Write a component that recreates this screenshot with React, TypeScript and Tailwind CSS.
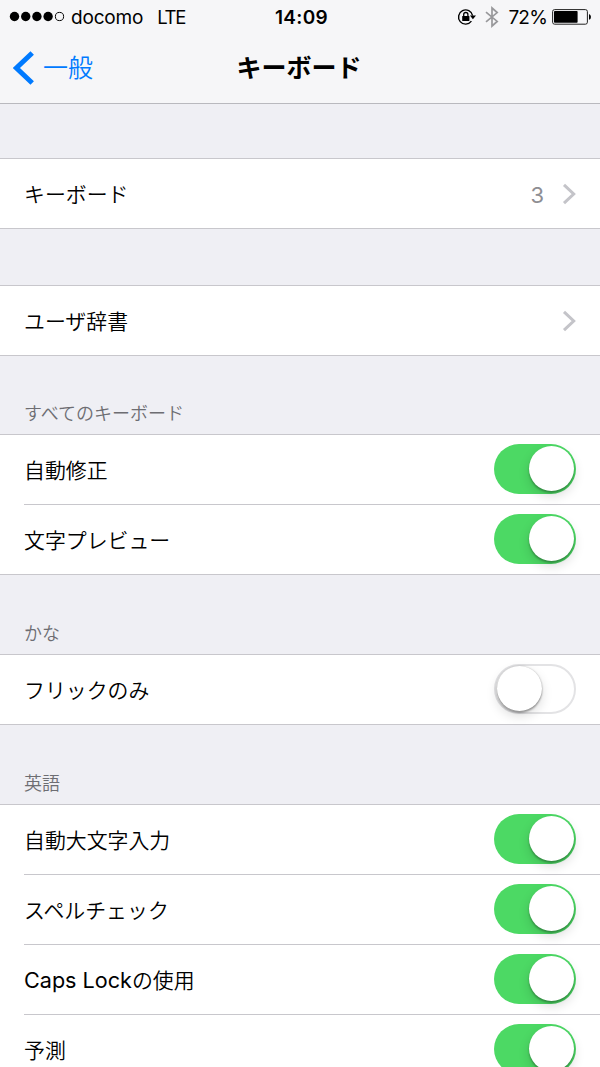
import { useState } from 'react';
import type { ReactNode } from 'react';
import clsx from 'clsx';

function SignalDots() {
  return (
    <svg width="56" height="12" viewBox="0 0 56 12">
      {[5.5, 16.7, 27.9, 39.1].map((cx) => (
        <circle key={cx} cx={cx} cy="5.5" r="4.7" fill="#000" />
      ))}
      <circle cx="50.5" cy="5.5" r="4.1" fill="none" stroke="#000" />
    </svg>
  );
}

function RotationLockIcon() {
  return (
    <svg width="20" height="18" viewBox="0 0 20 18" fill="none">
      <path
        d="M14.4 13.2A7.1 7.1 0 1 1 15.6 7.6"
        stroke="#000"
        strokeWidth="1.4"
      />
      <path d="M12.9 7.4H19L15.9 11.3Z" fill="#000" />
      <rect x="5.2" y="8" width="7.2" height="5" rx="0.5" fill="#000" />
      <path d="M6.7 8.4V6.6a2.1 2.1 0 0 1 4.2 0v1.8" stroke="#000" strokeWidth="1.3" />
    </svg>
  );
}

function BluetoothIcon() {
  return (
    <svg width="14" height="22" viewBox="0 0 14 22" fill="none">
      <path
        d="M1 6.2 12.2 15.4 7 20V2l5.2 4.6L1 15.8"
        stroke="#98989b"
        strokeWidth="1.7"
      />
    </svg>
  );
}

function BatteryIcon() {
  return (
    <svg width="40" height="16" viewBox="0 0 40 16">
      <rect x="0.6" y="0.6" width="34.8" height="14.6" rx="2" fill="none" stroke="#222" />
      <rect x="2" y="2" width="23.6" height="11.8" rx="0.8" fill="#000" />
      <path d="M37 5.2c1.3.2 1.9 1.3 1.9 2.7s-.6 2.5-1.9 2.7Z" fill="#000" />
    </svg>
  );
}

function StatusBar() {
  return (
    <div className="grid h-[34px] grid-cols-[1fr_auto_1fr] items-center text-[19px] leading-none">
      <div className="flex items-center pl-[9px]">
        <SignalDots />
        <span className="ml-[6px] tracking-[-0.2px]">docomo</span>
        <span className="ml-[14px] text-[18.5px] tracking-[-1.2px]">LTE</span>
      </div>
      <span className="pl-[3px] text-[19px] font-semibold tracking-[0.3px]">14:09</span>
      <div className="flex items-center justify-end pr-2">
        <RotationLockIcon />
        <span className="ml-[8px]">
          <BluetoothIcon />
        </span>
        <span className="ml-[9px] mr-[5px] text-[19px] tracking-[-0.8px]">72%</span>
        <BatteryIcon />
      </div>
    </div>
  );
}

function NavBar() {
  return (
    <div className="grid h-[69px] grid-cols-[1fr_auto_1fr] items-center">
      <button className="flex items-center pl-[13px] text-[25px] leading-none font-[350] text-[#007aff]">
        <svg className="-mt-px" width="22" height="34" viewBox="0 0 22 34" fill="none">
          <path d="M19.2 2 3.4 17l15.8 15" stroke="#007aff" strokeWidth="5" />
        </svg>
        <span className="ml-[8px]">一般</span>
      </button>
      <h1 className="pr-[2px] text-[25px] leading-none font-bold">キーボード</h1>
    </div>
  );
}

function Toggle({ defaultOn = false }: { defaultOn?: boolean }) {
  const [on, setOn] = useState(defaultOn);

  return (
    <button
      role="switch"
      aria-checked={on}
      onClick={() => setOn(!on)}
      className={clsx(
        'mb-px flex h-[50px] w-[82px] items-center rounded-full',
        on
          ? 'justify-end bg-[#4cd964] pr-[2px] pb-px'
          : 'border-2 border-[#e3e3e5] bg-white pb-px pl-px',
      )}
    >
      <span
        className={clsx(
          'size-[45px] rounded-full bg-white',
          on
            ? 'shadow-[0_2px_2px_rgba(0,0,0,0.28),0_5px_12px_rgba(0,0,0,0.14)]'
            : 'shadow-[0_2px_2px_rgba(0,0,0,0.3),0_0_2px_rgba(0,0,0,0.25),0_5px_12px_rgba(0,0,0,0.14)]',
        )}
      />
    </button>
  );
}

function Chevron() {
  return (
    <svg width="14" height="22" viewBox="0 0 14 22" fill="none">
      <path d="M2 1.8 11.7 11 2 20.2" stroke="#c4c4c9" strokeWidth="3" />
    </svg>
  );
}

function Group({ children }: { children: ReactNode }) {
  return (
    <div className="divide-y divide-[#c8c7cc] border-y border-[#c8c7cc] bg-white pl-6 [&>*]:box-content">
      {children}
    </div>
  );
}

function Row({ label, children }: { label: ReactNode; children: ReactNode }) {
  return (
    <div className="flex h-[69px] items-center justify-between pr-6">
      <span className="pt-[3px] text-[20.9px] leading-none font-[350]">{label}</span>
      {children}
    </div>
  );
}

function SectionHeader({ title }: { title: string }) {
  return (
    <h2 className="flex h-[79px] items-end pb-[11px] pl-6 text-[18px] leading-none font-[350] text-[#6d6d72]">
      {title}
    </h2>
  );
}

export default function App() {
  return (
    <div className="h-[1067px] w-[600px] overflow-hidden bg-[#efeff4] font-['Inter','Noto_Sans_CJK_JP',sans-serif] text-black">
      <header className="border-b border-[#b9b9be] bg-[#f6f6f8]">
        <StatusBar />
        <NavBar />
      </header>

      <main>
        <div className="h-[54px]" />
        <Group>
          <Row label="キーボード">
            <div className="flex items-center">
              <span className="mr-[18px] pt-[2px] text-[22px] leading-none text-[#8e8e93]">
                3
              </span>
              <Chevron />
            </div>
          </Row>
        </Group>

        <div className="h-14" />
        <Group>
          <Row label="ユーザ辞書">
            <Chevron />
          </Row>
        </Group>

        <div className="-mt-px">
          <SectionHeader title="すべてのキーボード" />
        </div>
        <Group>
          <Row label="自動修正">
            <Toggle defaultOn />
          </Row>
          <Row label="文字プレビュー">
            <Toggle defaultOn />
          </Row>
        </Group>

        <SectionHeader title="かな" />
        <Group>
          <Row label="フリックのみ">
            <Toggle />
          </Row>
        </Group>

        <SectionHeader title="英語" />
        <Group>
          <Row label="自動大文字入力">
            <Toggle defaultOn />
          </Row>
          <Row label="スペルチェック">
            <Toggle defaultOn />
          </Row>
          <Row
            label={
              <>
                <span className="text-[21.6px] leading-none font-normal">Caps Lock</span>の使用
              </>
            }
          >
            <Toggle defaultOn />
          </Row>
          <Row label="予測">
            <Toggle defaultOn />
          </Row>
        </Group>
      </main>
    </div>
  );
}
